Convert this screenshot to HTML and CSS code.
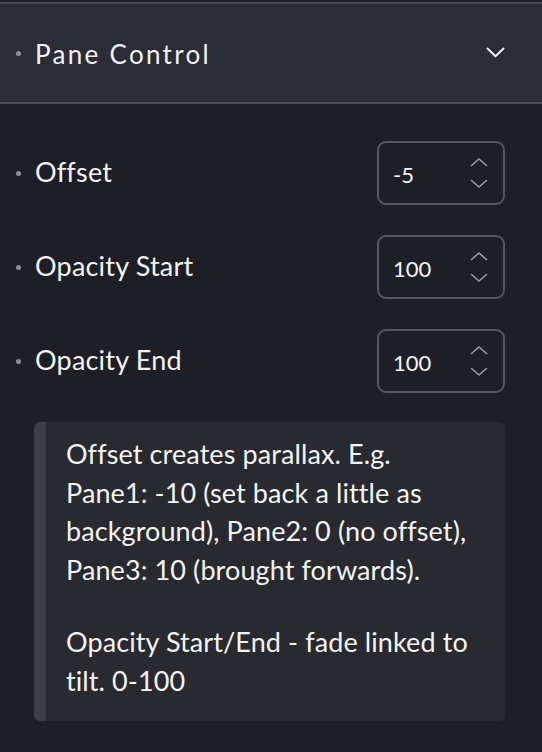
FILE: index.html
```html
<!DOCTYPE html>
<html>
<head>
<meta charset="utf-8">
<link rel="stylesheet" href="styles.css">
</head>
<body>
<div class="panel">
  <div class="header">
    <span class="dot"></span>
    <span class="title">Pane Control</span>
    <svg class="chev" width="19" height="11" viewBox="0 0 19 11"><path d="M1.5 1.5 L9.5 9.2 L17.5 1.5" fill="none" stroke="#f2f2f2" stroke-width="2" stroke-linecap="round" stroke-linejoin="round"/></svg>
  </div>
  <div class="content">
    <div class="row">
      <span class="dot"></span>
      <span class="label">Offset</span>
      <div class="num">
        <span class="val">-5</span>
        <span class="spin">
          <svg width="18" height="30" viewBox="0 0 18 30"><path d="M1.5 7.5 L9 1 L16.5 7.5 M1.5 22.5 L9 29 L16.5 22.5" fill="none" stroke="#9c9ea5" stroke-width="1.6" stroke-linecap="round" stroke-linejoin="round"/></svg>
        </span>
      </div>
    </div>
    <div class="row">
      <span class="dot"></span>
      <span class="label">Opacity Start</span>
      <div class="num">
        <span class="val">100</span>
        <span class="spin">
          <svg width="18" height="30" viewBox="0 0 18 30"><path d="M1.5 7.5 L9 1 L16.5 7.5 M1.5 22.5 L9 29 L16.5 22.5" fill="none" stroke="#9c9ea5" stroke-width="1.6" stroke-linecap="round" stroke-linejoin="round"/></svg>
        </span>
      </div>
    </div>
    <div class="row">
      <span class="dot"></span>
      <span class="label">Opacity End</span>
      <div class="num">
        <span class="val">100</span>
        <span class="spin">
          <svg width="18" height="30" viewBox="0 0 18 30"><path d="M1.5 7.5 L9 1 L16.5 7.5 M1.5 22.5 L9 29 L16.5 22.5" fill="none" stroke="#9c9ea5" stroke-width="1.6" stroke-linecap="round" stroke-linejoin="round"/></svg>
        </span>
      </div>
    </div>
    <div class="info">
      <p>Offset creates parallax. E.g.<br>Pane1: -10 (set back a little as<br>background), Pane2: 0 (no offset),<br>Pane3: 10 (brought forwards).</p>
      <p>Opacity Start/End - fade linked to<br>tilt. 0-100</p>
    </div>
  </div>
</div>
</body>
</html>
```

FILE: styles.css
```css
html, body {
  margin: 0;
  padding: 0;
  background: #1e1f26;
  font-family: Lato, "Noto Sans", sans-serif;
  color: #f4f4f4;
}
.panel {
  padding-top: 2px;
  width: 542px;
  height: 752px;
  box-sizing: border-box;
  overflow: hidden;
}
.header {
  display: flex;
  align-items: center;
  height: 98px;
  background: #2a2d36;
  border-top: 2px solid #4a4c55;
  border-bottom: 2px solid #4a4c55;
  padding-left: 16px;
  padding-right: 37px;
}
.dot {
  width: 5px;
  height: 5px;
  border-radius: 50%;
  background: #8c8e98;
  flex: none;
  margin-right: 14px;
}
.title {
  font-size: 26px;
  letter-spacing: 2.3px;
  flex: 1;
  color: #f2f2f4;
  padding-top: 1px;
}
.chev {
  display: block;
  margin-top: -2px;
}
.content {
  padding: 37px 37px 0 34px;
  display: flex;
  flex-direction: column;
  gap: 30px;
}
.row {
  display: flex;
  align-items: center;
  height: 64px;
  margin-left: -18px;
}
.label {
  flex: 1;
  font-size: 27px;
  letter-spacing: 0.2px;
  color: #f4f4f4;
  margin-top: -3px;
}
.num {
  width: 128px;
  height: 64px;
  box-sizing: border-box;
  border: 2px solid #55575f;
  border-radius: 9px;
  display: flex;
  align-items: center;
  padding-left: 14px;
  padding-right: 15px;
}
.val {
  flex: 1;
  font-size: 22px;
  color: #f4f4f4;
  padding-top: 2px;
}
.spin svg {
  display: block;
}
.info {
  margin-top: -1px;
  background: #282a30;
  border-left: 12px solid #3c3e45;
  border-radius: 6px;
  padding: 13px 16px 21px 20px;
  font-size: 27px;
  letter-spacing: 0.1px;
  line-height: 38.5px;
  color: #f4f4f4;
  white-space: nowrap;
}
.info p {
  margin: 0;
}
.info p + p {
  margin-top: 34px;
}
```
